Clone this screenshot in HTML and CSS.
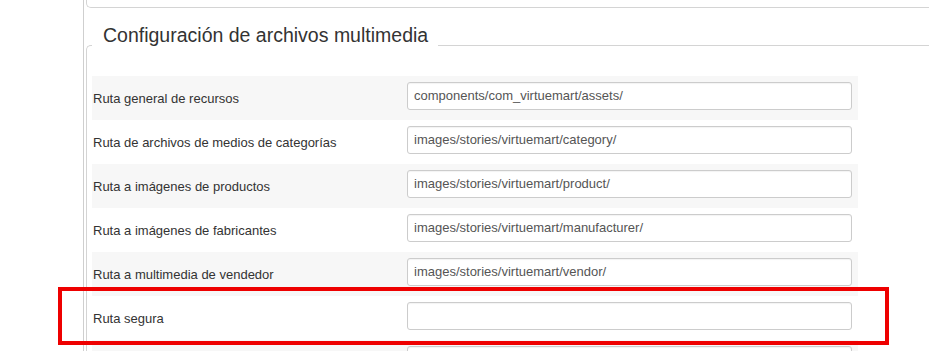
FILE: index.html
```html
<!DOCTYPE html>
<html lang="es">
<head>
<meta charset="utf-8">
<title>Configuración de archivos multimedia</title>
<link rel="stylesheet" href="styles.css">
</head>
<body>
<div class="page">
  <div class="panel">
    <div class="prev-box"></div>
    <fieldset class="group">
      <legend class="group-title">Configuración de archivos multimedia</legend>
      <div class="rows">
        <div class="row alt">
          <label class="row-label">Ruta general de recursos</label>
          <input class="row-input" type="text" value="components/com_virtuemart/assets/">
        </div>
        <div class="row">
          <label class="row-label">Ruta de archivos de medios de categorías</label>
          <input class="row-input" type="text" value="images/stories/virtuemart/category/">
        </div>
        <div class="row alt">
          <label class="row-label">Ruta a imágenes de productos</label>
          <input class="row-input" type="text" value="images/stories/virtuemart/product/">
        </div>
        <div class="row">
          <label class="row-label">Ruta a imágenes de fabricantes</label>
          <input class="row-input" type="text" value="images/stories/virtuemart/manufacturer/">
        </div>
        <div class="row alt">
          <label class="row-label">Ruta a multimedia de vendedor</label>
          <input class="row-input" type="text" value="images/stories/virtuemart/vendor/">
        </div>
        <div class="row">
          <label class="row-label">Ruta segura</label>
          <input class="row-input" type="text" value="">
        </div>
        <div class="row alt">
          <label class="row-label">&nbsp;</label>
          <input class="row-input" type="text" value="">
        </div>
      </div>
    </fieldset>
  </div>
  <div class="highlight"></div>
</div>
</body>
</html>
```

FILE: styles.css
```css
html, body {
  margin: 0;
  padding: 0;
  overflow: hidden;
  background: #fff;
}
body {
  font-family: "Liberation Sans", Arial, Helvetica, sans-serif;
  color: #333;
  width: 929px;
  height: 351px;
}
.page {
  position: relative;
  height: 351px;
  overflow: hidden;
}
.panel {
  margin-left: 83px;
  width: 900px;
  border-left: 1px solid #cfcfcf;
  padding-left: 2px;
  height: 400px;
}
.prev-box {
  height: 7px;
  border: 1px solid #d4d4d4;
  border-top: none;
  border-right: none;
  border-radius: 0 0 0 5px;
}
.group {
  margin: 0;
  margin-top: 15px;
  border: 1px solid #d4d4d4;
  border-right: none;
  border-bottom: none;
  border-radius: 5px 0 0 0;
  padding: 9px 0 0 5px;
  min-width: 0;
}
.group-title {
  font-size: 19.5px;
  line-height: 24px;
  color: #333;
  padding: 0 10px 20px 11px;
  margin: 0;
}
.rows {
  width: 766px;
}
.row {
  display: flex;
  align-items: center;
  height: 44px;
  padding: 0 6px 0 1px;
  box-sizing: border-box;
}
.row.alt {
  background: #f7f7f7;
}
.row-label {
  width: 314px;
  font-size: 13px;
  color: #333;
  padding-top: 1px;
}
.row-input {
  width: 445px;
  height: 28px;
  box-sizing: border-box;
  margin: 0 0 5px 0;
  border: 1px solid #cccccc;
  border-radius: 3px;
  padding: 0 6px;
  font-family: "Liberation Sans", Arial, Helvetica, sans-serif;
  font-size: 13px;
  color: #555;
  background: #fff;
  box-shadow: inset 0 1px 1px rgba(0,0,0,0.05);
}
.highlight {
  position: absolute;
  left: 58px;
  top: 287px;
  width: 831px;
  height: 58px;
  box-sizing: border-box;
  border: 4px solid #ee0000;
}
```
